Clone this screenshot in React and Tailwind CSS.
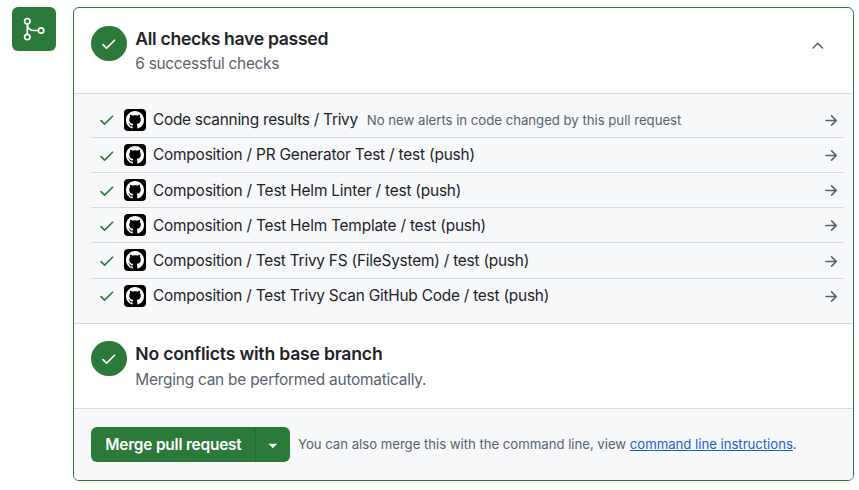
const CHECK =
  'M13.78 4.22a.75.75 0 0 1 0 1.06l-7.25 7.25a.75.75 0 0 1-1.06 0L2.22 9.28a.751.751 0 0 1 .018-1.042.751.751 0 0 1 1.042-.018L6 10.94l6.72-6.72a.75.75 0 0 1 1.06 0Z';
const ARROW =
  'M8.22 2.97a.75.75 0 0 1 1.06 0l4.25 4.25a.75.75 0 0 1 0 1.06l-4.25 4.25a.751.751 0 0 1-1.042-.018.751.751 0 0 1-.018-1.042l2.97-2.97H3.75a.75.75 0 0 1 0-1.5h7.44L8.22 4.03a.75.75 0 0 1 0-1.06Z';
const CHEVRON_UP =
  'M3.22 10.53a.749.749 0 0 1 0-1.06l4.25-4.25a.749.749 0 0 1 1.06 0l4.25 4.25a.749.749 0 1 1-1.06 1.06L8 6.811 4.28 10.53a.749.749 0 0 1-1.06 0Z';
const CARET = 'm4.427 7.427 3.396 3.396a.25.25 0 0 0 .354 0l3.396-3.396A.25.25 0 0 0 11.396 7H4.604a.25.25 0 0 0-.177.427Z';
const GITHUB =
  'M8 0c4.42 0 8 3.58 8 8a8.013 8.013 0 0 1-5.45 7.59c-.4.08-.55-.17-.55-.38 0-.27.01-1.13.01-2.2 0-.75-.25-1.23-.54-1.48 1.78-.2 3.65-.88 3.65-3.95 0-.88-.31-1.59-.82-2.15.08-.2.36-1.02-.08-2.12 0 0-.67-.22-2.2.82-.64-.18-1.32-.27-2-.27-.68 0-1.36.09-2 .27-1.53-1.03-2.2-.82-2.2-.82-.44 1.1-.16 1.92-.08 2.12-.51.56-.82 1.28-.82 2.15 0 3.06 1.86 3.75 3.64 3.95-.23.2-.44.55-.51 1.07-.46.21-1.61.55-2.33-.66-.15-.24-.6-.83-1.23-.82-.67.01-.27.38.01.53.34.19.73.9.82 1.13.16.45.68 1.31 2.69.94 0 .67.01 1.3.01 1.49 0 .21-.15.45-.55.38A7.995 7.995 0 0 1 0 8c0-4.42 3.58-8 8-8Z';

function Icon({ d, className }) {
  return (
    <svg viewBox="0 0 16 16" fill="currentColor" aria-hidden="true" className={`shrink-0 ${className}`}>
      <path d={d} />
    </svg>
  );
}

function MergeIcon() {
  return (
    <svg viewBox="0 0 24 26" fill="none" stroke="currentColor" strokeWidth="1.7" className="h-[26px] w-6" aria-hidden="true">
      <circle cx="5.3" cy="5.2" r="2.7" />
      <circle cx="5.3" cy="21" r="2.7" />
      <circle cx="19.1" cy="14.5" r="2.7" />
      <path d="M5.3 8v10.4M5.3 8c0 4 2.6 6.5 6.4 6.5h4.7" />
    </svg>
  );
}

const checks = [
  {
    name: 'Code scanning results / Trivy',
    tracking: 'tracking-[-0.27px]',
    note: 'No new alerts in code changed by this pull request',
  },
  { name: 'Composition / PR Generator Test / test (push)' },
  { name: 'Composition / Test Helm Linter / test (push)' },
  { name: 'Composition / Test Helm Template / test (push)', tracking: 'tracking-[-0.2px]' },
  { name: 'Composition / Test Trivy FS (FileSystem) / test (push)', tracking: 'tracking-[-0.22px]' },
  { name: 'Composition / Test Trivy Scan GitHub Code / test (push)', tracking: 'tracking-[-0.22px]' },
];

function CheckRow({ name, note, tracking = 'tracking-[-0.19px]' }) {
  return (
    <li className="flex h-[35.2px] items-center border-b border-[#d5dbe2] pl-[7px] pr-1 last:border-b-0 last:pb-px">
      <Icon d={CHECK} className="mt-px size-[17.6px] text-[#2c7a3a]" />
      <span className="ml-2 flex size-[22px] shrink-0 items-center justify-center rounded-[4px] bg-black text-white">
        <Icon d={GITHUB} className="size-[18px]" />
      </span>
      <span className={`ml-[7.4px] whitespace-nowrap text-[15.4px] text-[#1f2328] ${tracking}`}>{name}</span>
      {note && (
        <span className="ml-[9px] mt-0.5 whitespace-nowrap text-[13.2px] tracking-[-0.02px] text-[#59636e]">{note}</span>
      )}
      <Icon d={ARROW} className="ml-auto mt-[2px] size-[17.6px] text-[#59636e]" />
    </li>
  );
}

function StatusHeader({ title, titleClass, detail, detailClass, children }) {
  return (
    <div className="flex">
      <span className="mt-px flex h-[35px] w-9 shrink-0 items-center justify-center rounded-full bg-[#2c7a3a] text-white">
        <Icon d={CHECK} className="size-[17.6px]" />
      </span>
      <div className="ml-[8.3px] grow pt-px">
        <h3 className={`text-[17.6px] font-semibold leading-[26px] text-[#1f2328] ${titleClass}`}>{title}</h3>
        <p className={`text-[15.4px] text-[#59636e] ${detailClass}`}>{detail}</p>
      </div>
      {children}
    </div>
  );
}

export default function App() {
  return (
    <div className="flex h-[490px] w-[859px] items-start bg-white pl-3 pt-[7px] font-['Inter','Liberation_Sans',sans-serif]">
      <div className="flex size-11 shrink-0 items-center justify-center rounded-[6px] bg-[#2c7a3a] text-white">
        <MergeIcon />
      </div>
      <section className="ml-[17px] h-[474px] w-[781px] shrink-0 overflow-hidden rounded-[6px] border border-[#2c7a3a]">
        <div className="h-[85px] px-[17px] pt-[17px]">
          <StatusHeader
            title="All checks have passed"
            titleClass="tracking-[-0.31px]"
            detail="6 successful checks"
            detailClass="leading-6 tracking-[-0.27px]"
          >
            <button className="mr-[9px] mt-3 self-start text-[#59636e]" aria-label="Collapse checks">
              <Icon d={CHEVRON_UP} className="size-[17.6px]" />
            </button>
          </StatusHeader>
        </div>
        <ul className="h-[230px] border-t border-[#d5dbe2] bg-[#f6f8fa] pl-[17px] pr-[9px] pt-[8.6px]">
          {checks.map((check) => (
            <CheckRow key={check.name} {...check} />
          ))}
        </ul>
        <div className="h-[85px] border-t border-[#d5dbe2] px-[17px] pt-4">
          <StatusHeader
            title="No conflicts with base branch"
            titleClass="tracking-[-0.2px]"
            detail="Merging can be performed automatically."
            detailClass="leading-[26px] tracking-[-0.22px]"
          />
        </div>
        <div className="flex h-[72px] items-center border-t border-[#d5dbe2] bg-[#f6f8fa] pl-[17px]">
          <div className="flex h-[35px] w-[199px] shrink-0 overflow-hidden rounded-[6px] bg-[#2c7a3a] text-white">
            <button className="w-[165px] whitespace-nowrap border-r border-[#236b30] pl-px text-[15.4px] font-semibold tracking-[-0.18px]">
              Merge pull request
            </button>
            <button className="flex grow items-center justify-center" aria-label="Merge options">
              <Icon d={CARET} className="size-[17.6px]" />
            </button>
          </div>
          <p className="ml-2 whitespace-nowrap text-[13.2px] tracking-[-0.03px] text-[#59636e]">
            You can also merge this with the command line, view{' '}
            <a href="#" className="text-[#1f5fd6] underline">command line instructions</a>.
          </p>
        </div>
      </section>
    </div>
  );
}
